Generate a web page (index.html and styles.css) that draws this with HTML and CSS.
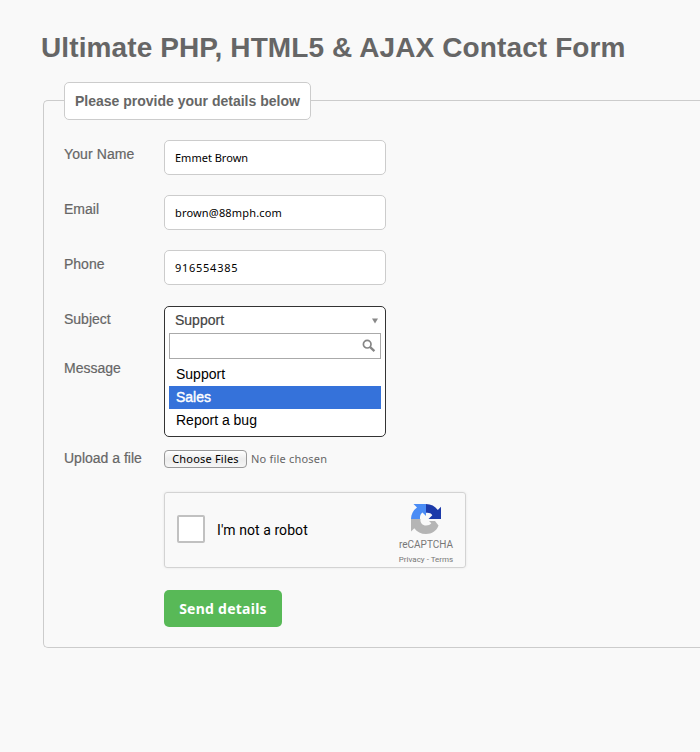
FILE: index.html
```html
<!DOCTYPE html>
<html lang="en">
<head>
<meta charset="utf-8">
<title>Contact Form</title>
<link rel="stylesheet" href="styles.css">
</head>
<body>
<main class="page">
  <h1 class="title"><span>Ultimate PHP, HTML5 &amp; AJAX Contact Form</span></h1>
  <fieldset class="panel">
    <legend class="legend">Please provide your details below</legend>
    <div class="row field"><label class="label l-name">Your Name</label><div class="input"><span>Emmet Brown</span></div></div>
    <div class="row field"><label class="label">Email</label><div class="input"><span class="v-email">brown@88mph.com</span></div></div>
    <div class="row field"><label class="label">Phone</label><div class="input"><span class="v-phone">916554385</span></div></div>
    <div class="row subject">
      <label class="label">Subject</label>
      <div class="select">
        <div class="current"><span>Support</span><svg class="arrow" width="6" height="6" viewBox="0 0 6 6"><path d="M0 0.5H6L3 5.5Z" fill="#888"/></svg></div>
        <div class="search"><svg width="14" height="14" viewBox="0 0 14 14" fill="none" stroke="#858585"><circle cx="5.2" cy="5.2" r="3.8" stroke-width="1.7"/><path d="M8.2 8.2L12.4 12.2" stroke-width="2.3"/></svg></div>
        <ul class="options">
          <li><span>Support</span></li>
          <li class="active"><span>Sales</span></li>
          <li><span>Report a bug</span></li>
        </ul>
      </div>
    </div>
    <div class="row message"><label class="label">Message</label></div>
    <div class="row upload"><label class="label">Upload a file</label><div class="file"><span class="choose"><span>Choose Files</span></span><span class="nofile">No file chosen</span></div></div>
    <div class="captcha">
      <span class="checkbox"></span>
      <span class="robot">I'm not a robot</span>
      <div class="brand">
        <svg class="logo" width="32" height="32" viewBox="0 0 32 32">
          <path d="M1 16C1 11 3.500 7 7 4.500L3.500 1H16V13L12.500 9.500C10.500 11 9.800 13 10 16Z" fill="#4a8cf5"/>
          <path d="M16 1C21 1 25 3.200 27.800 7L31 3.800V16H18.500L22.300 12.200C21 10.200 19 9.500 16 9.800Z" fill="#1c3aa9"/>
          <path d="M1 16H10.500C10 20 12.500 22.500 16 22.500C18.500 22.500 20 21.800 21.300 20.300L19 18H25L28.500 22.500C26.500 28 22 31 16 31C11 31 7 28.800 4.300 25.200L1 28.500Z" fill="#b5b5b5"/>
        </svg>
        <span class="name">reCAPTCHA</span>
        <span class="terms">Privacy - Terms</span>
      </div>
    </div>
    <button class="send" type="button"><span>Send details</span></button>
  </fieldset>
</main>
</body>
</html>
```

FILE: styles.css
```css
* { box-sizing: border-box; }
body {
  margin: 0;
  background: #f9f9f9;
  color: #666;
  font: 14px/20px "Liberation Sans", Arial, sans-serif;
}
.page { padding: 28px 0 0 43px; height: 752px; }
.title { margin: 0 0 13px -2px; height: 40px; font-size: 28px; line-height: 39px; letter-spacing: .11px; white-space: nowrap; }
.panel { margin: 0; border: 1px solid #ccc; border-right: 0; border-radius: 5px 0 0 5px; padding: 21px 0 20px 20px; height: 567px; min-width: 0; }
.legend {
  position: relative; top: 1px;
  width: 247px; height: 38px; padding: 0 10px;
  border: 1px solid #ccc; border-radius: 5px; background: #fff;
  font-weight: bold; line-height: 36px; white-space: nowrap;
}
.row { display: flex; align-items: flex-start; }
.label { width: 100px; padding-top: 4px; flex: none; -webkit-text-stroke: .2px #666; }
.l-name { letter-spacing: .1px; }
.field { height: 35px; margin-bottom: 20px; }
.input {
  width: 222px; height: 35px; padding: 0 10px;
  border: 1px solid #ccc; border-radius: 5px; background: #fff;
  color: #000; font: 11px/34px "Noto Sans", sans-serif;
}
.v-email { letter-spacing: .17px; }
.v-phone { letter-spacing: .73px; }
.subject { height: 49px; }
.select {
  width: 222px; height: 131px; margin-top: 1px; padding: 0 4px;
  border: 1px solid #333; border-radius: 5px; background: #fff;
  position: relative; z-index: 2;
}
.current { display: flex; align-items: center; justify-content: space-between; height: 26px; padding: 0 3px 0 6px; color: #444; -webkit-text-stroke: .2px #444; }
.arrow { margin-top: 2px; }
.search { display: flex; justify-content: flex-end; height: 26px; padding: 5px 4px 0 0; border: 1px solid #aaa; }
.options { list-style: none; margin: 4px 0 0; padding: 0; color: #000; }
.options li { height: 23px; padding-left: 7px; line-height: 23px; }
.options .active { background: #3572da; color: #fff; -webkit-text-stroke: .4px #fff; }
.message { height: 90px; }
.upload { height: 48px; }
.file { display: flex; align-items: center; gap: 4px; padding-top: 6px; font: 11px/17px "Noto Sans", sans-serif; }
.choose {
  width: 83px; height: 18px; text-align: center; color: #000; line-height: 16px; white-space: nowrap; letter-spacing: .2px;
  border: 1px solid #999; border-radius: 4px; background: linear-gradient(#fff, #ececec 50%, #f6f6f6);
}
.nofile { white-space: nowrap; letter-spacing: .2px; margin-top: -2px; }
.captcha {
  display: flex; align-items: center;
  width: 302px; height: 76px; margin: 0 0 22px 100px; padding-left: 12px;
  border: 1px solid #d3d3d3; border-radius: 3px; box-shadow: 0 0 3px rgba(0,0,0,.08);
}
.checkbox { width: 28px; height: 28px; margin-top: -2px; border: 2px solid #c1c1c1; border-radius: 2px; background: #fff; }
.robot { margin-left: 12px; color: #000; font: 14px/20px Roboto, sans-serif; letter-spacing: .07px; }
.brand { display: flex; flex-direction: column; align-items: center; width: 78px; margin: 9px 0 0 auto; color: #777; font-family: Roboto, sans-serif; }
.logo { display: block; }
.name { font-size: 10px; line-height: 19px; }
.terms { font-size: 8px; line-height: 12px; }
.send {
  display: block; width: 118px; height: 37px; margin: 0 0 0 100px; padding: 0;
  border: 0; border-radius: 5px; background: #58b957; color: #fff;
  font: bold 14px/37px "Noto Sans", sans-serif; letter-spacing: .25px;
}
```
